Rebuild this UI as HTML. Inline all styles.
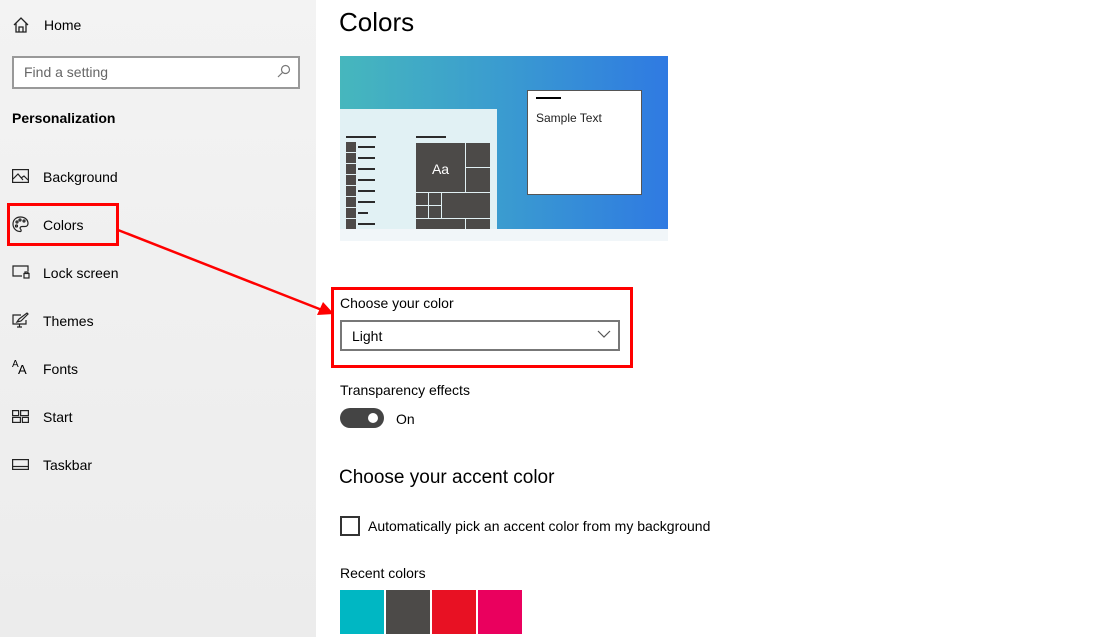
<!DOCTYPE html>
<html><head><style>
body{margin:0;width:1111px;height:637px;overflow:hidden;background:#fff;font-family:"Liberation Sans",sans-serif;position:relative;color:#000}
.a{position:absolute}
.side{left:0;top:0;width:316px;height:637px;background:linear-gradient(#f3f3f3,#ececec)}
.t{font-size:14px;white-space:nowrap}
.bar{position:absolute;background:#2b2b2b;height:2px}
.sq{position:absolute;background:#4c4a48}
</style></head><body>
<div class="a side"></div>
<svg class="a" style="left:12px;top:16px" width="18" height="18" viewBox="0 0 18 18" fill="none" stroke="#222" stroke-width="1.3"><path d="M2 9 L9 2 L16 9 M4 7.5 V16 H14 V7.5 M7 16 V11 H11 V16"/></svg>
<div class="a t" style="left:44px;top:17px">Home</div>
<div class="a" style="left:12px;top:56px;width:284px;height:29px;border:2px solid #999;background:#fff"></div>
<div class="a t" style="left:24px;top:64px;color:#666">Find a setting</div>
<svg class="a" style="left:277px;top:64px" width="14" height="14" viewBox="0 0 14 14" fill="none" stroke="#777" stroke-width="1.2"><circle cx="8.5" cy="5.5" r="4"/><path d="M5.5 8.5 L1 13"/></svg>
<div class="a t" style="left:12px;top:110px;font-weight:bold">Personalization</div>

<svg class="a" style="left:12px;top:169px" width="17" height="14" viewBox="0 0 17 14" fill="none" stroke="#222" stroke-width="1.2"><rect x="0.6" y="0.6" width="15.8" height="12.8"/><path d="M1 10 L6 5 L11 11 M9 9 L12 7 L16 11"/></svg>
<div class="a t" style="left:43px;top:169px">Background</div>
<svg class="a" style="left:12px;top:216px" width="17" height="17" viewBox="0 0 17 17" fill="none" stroke="#222" stroke-width="1.2"><path d="M8.5 1 C4 1 1 4 1 8 C1 12 4 15.5 8 15.5 C9.5 15.5 9.5 14 8.5 13 C7.5 12 8.5 10.5 10 10.5 H13 C15 10.5 16 9 16 7.5 C16 3.5 12.5 1 8.5 1Z"/><circle cx="5" cy="6" r="1"/><circle cx="8" cy="4" r="1"/><circle cx="12" cy="5" r="1"/><circle cx="4.5" cy="10" r="1"/></svg>
<div class="a t" style="left:43px;top:217px">Colors</div>
<svg class="a" style="left:12px;top:265px" width="18" height="14" viewBox="0 0 18 14" fill="none" stroke="#222" stroke-width="1.2"><path d="M10 11 H1 V1 H16 V6"/><rect x="12" y="8.5" width="5" height="4.5"/><path d="M13 8.5 V7 H16 V8.5"/></svg>
<div class="a t" style="left:43px;top:265px">Lock screen</div>
<svg class="a" style="left:12px;top:312px" width="18" height="16" viewBox="0 0 18 16" fill="none" stroke="#222" stroke-width="1.2"><path d="M9 3 H1 V12 H14 V8 M5 15 H10 M7.5 12 V15"/><path d="M5 10 L7 7 L15 1 L16 2 L9 9Z"/></svg>
<div class="a t" style="left:43px;top:313px">Themes</div>
<div class="a" style="left:12px;top:359px;font-size:10px">A</div><div class="a" style="left:18px;top:362px;font-size:13px">A</div>
<div class="a t" style="left:43px;top:361px">Fonts</div>
<svg class="a" style="left:12px;top:410px" width="17" height="13" viewBox="0 0 17 13" fill="none" stroke="#222" stroke-width="1.2"><rect x="0.6" y="0.6" width="6" height="5"/><rect x="8.6" y="0.6" width="7.8" height="5"/><rect x="0.6" y="7.4" width="7.8" height="5"/><rect x="10.4" y="7.4" width="6" height="5"/></svg>
<div class="a t" style="left:43px;top:409px">Start</div>
<svg class="a" style="left:12px;top:459px" width="17" height="11" viewBox="0 0 17 11" fill="none" stroke="#222" stroke-width="1.2"><rect x="0.6" y="0.6" width="15.8" height="9.8"/><path d="M1 7.5 H16"/></svg>
<div class="a t" style="left:43px;top:457px">Taskbar</div>

<div class="a" style="left:7px;top:203px;width:106px;height:37px;border:3px solid #f00"></div>
<svg class="a" style="left:0;top:0" width="1111" height="637"><path d="M118 230 L322 310" stroke="#f00" stroke-width="2.5"/><path d="M334 314 L317 315 L323 302Z" fill="#f00"/></svg>

<div class="a" style="left:339px;top:7px;font-size:26px">Colors</div>
<div class="a" style="left:340px;top:56px;width:328px;height:173px;background:linear-gradient(90deg,#46b7bd,#3a9bd0 50%,#2f7ae2)"></div>
<div class="a" style="left:340px;top:229px;width:328px;height:12px;background:#f1f6f9"></div>
<div class="a" style="left:340px;top:109px;width:157px;height:120px;background:#e1f1f4"></div>
<div class="bar" style="left:346px;top:136px;width:30px"></div>
<div class="bar" style="left:416px;top:136px;width:30px"></div>
<div class="sq" style="left:346px;top:142px;width:10px;height:10px"></div><div class="bar" style="left:358px;top:146px;width:17px"></div>
<div class="sq" style="left:346px;top:153px;width:10px;height:10px"></div><div class="bar" style="left:358px;top:157px;width:17px"></div>
<div class="sq" style="left:346px;top:164px;width:10px;height:10px"></div><div class="bar" style="left:358px;top:168px;width:17px"></div>
<div class="sq" style="left:346px;top:175px;width:10px;height:10px"></div><div class="bar" style="left:358px;top:179px;width:17px"></div>
<div class="sq" style="left:346px;top:186px;width:10px;height:10px"></div><div class="bar" style="left:358px;top:190px;width:17px"></div>
<div class="sq" style="left:346px;top:197px;width:10px;height:10px"></div><div class="bar" style="left:358px;top:201px;width:17px"></div>
<div class="sq" style="left:346px;top:208px;width:10px;height:10px"></div><div class="bar" style="left:358px;top:212px;width:10px"></div>
<div class="sq" style="left:346px;top:219px;width:10px;height:10px"></div><div class="bar" style="left:358px;top:223px;width:17px"></div>
<div class="sq" style="left:416px;top:143px;width:49px;height:49px;color:#fff;font-size:14px;text-align:center;line-height:52px">Aa</div>
<div class="sq" style="left:466px;top:143px;width:24px;height:24px"></div>
<div class="sq" style="left:466px;top:168px;width:24px;height:24px"></div>
<div class="sq" style="left:416px;top:193px;width:12px;height:12px"></div>
<div class="sq" style="left:429px;top:193px;width:12px;height:12px"></div>
<div class="sq" style="left:416px;top:206px;width:12px;height:12px"></div>
<div class="sq" style="left:429px;top:206px;width:12px;height:12px"></div>
<div class="sq" style="left:442px;top:193px;width:48px;height:25px"></div>
<div class="sq" style="left:416px;top:219px;width:49px;height:10px"></div>
<div class="sq" style="left:466px;top:219px;width:24px;height:10px"></div>
<div class="a" style="left:527px;top:90px;width:113px;height:103px;background:#fff;border:1px solid #555"></div>
<div class="a" style="left:536px;top:97px;width:25px;height:2px;background:#000"></div>
<div class="a" style="left:536px;top:111px;font-size:12px;color:#222">Sample Text</div>

<div class="a" style="left:331px;top:287px;width:296px;height:75px;border:3px solid #f00"></div>
<div class="a t" style="left:340px;top:295px">Choose your color</div>
<div class="a" style="left:340px;top:320px;width:276px;height:27px;border:2px solid #777"></div>
<div class="a t" style="left:352px;top:328px">Light</div>
<svg class="a" style="left:597px;top:330px" width="14" height="9" viewBox="0 0 14 9" fill="none" stroke="#555" stroke-width="1.2"><path d="M1 1 L7 7 L13 1"/></svg>
<div class="a t" style="left:340px;top:382px">Transparency effects</div>
<div class="a" style="left:340px;top:408px;width:44px;height:20px;border-radius:10px;background:#444"></div>
<div class="a" style="left:368px;top:413px;width:10px;height:10px;border-radius:5px;background:#fff"></div>
<div class="a t" style="left:396px;top:411px">On</div>
<div class="a" style="left:339px;top:467px;font-size:19px">Choose your accent color</div>
<div class="a" style="left:340px;top:516px;width:16px;height:16px;border:2px solid #333"></div>
<div class="a t" style="left:368px;top:518px">Automatically pick an accent color from my background</div>
<div class="a t" style="left:340px;top:565px">Recent colors</div>
<div class="a" style="left:340px;top:590px;width:44px;height:44px;background:#00b7c3"></div>
<div class="a" style="left:386px;top:590px;width:44px;height:44px;background:#4c4a48"></div>
<div class="a" style="left:432px;top:590px;width:44px;height:44px;background:#e81123"></div>
<div class="a" style="left:478px;top:590px;width:44px;height:44px;background:#ea005e"></div>
</body></html>
